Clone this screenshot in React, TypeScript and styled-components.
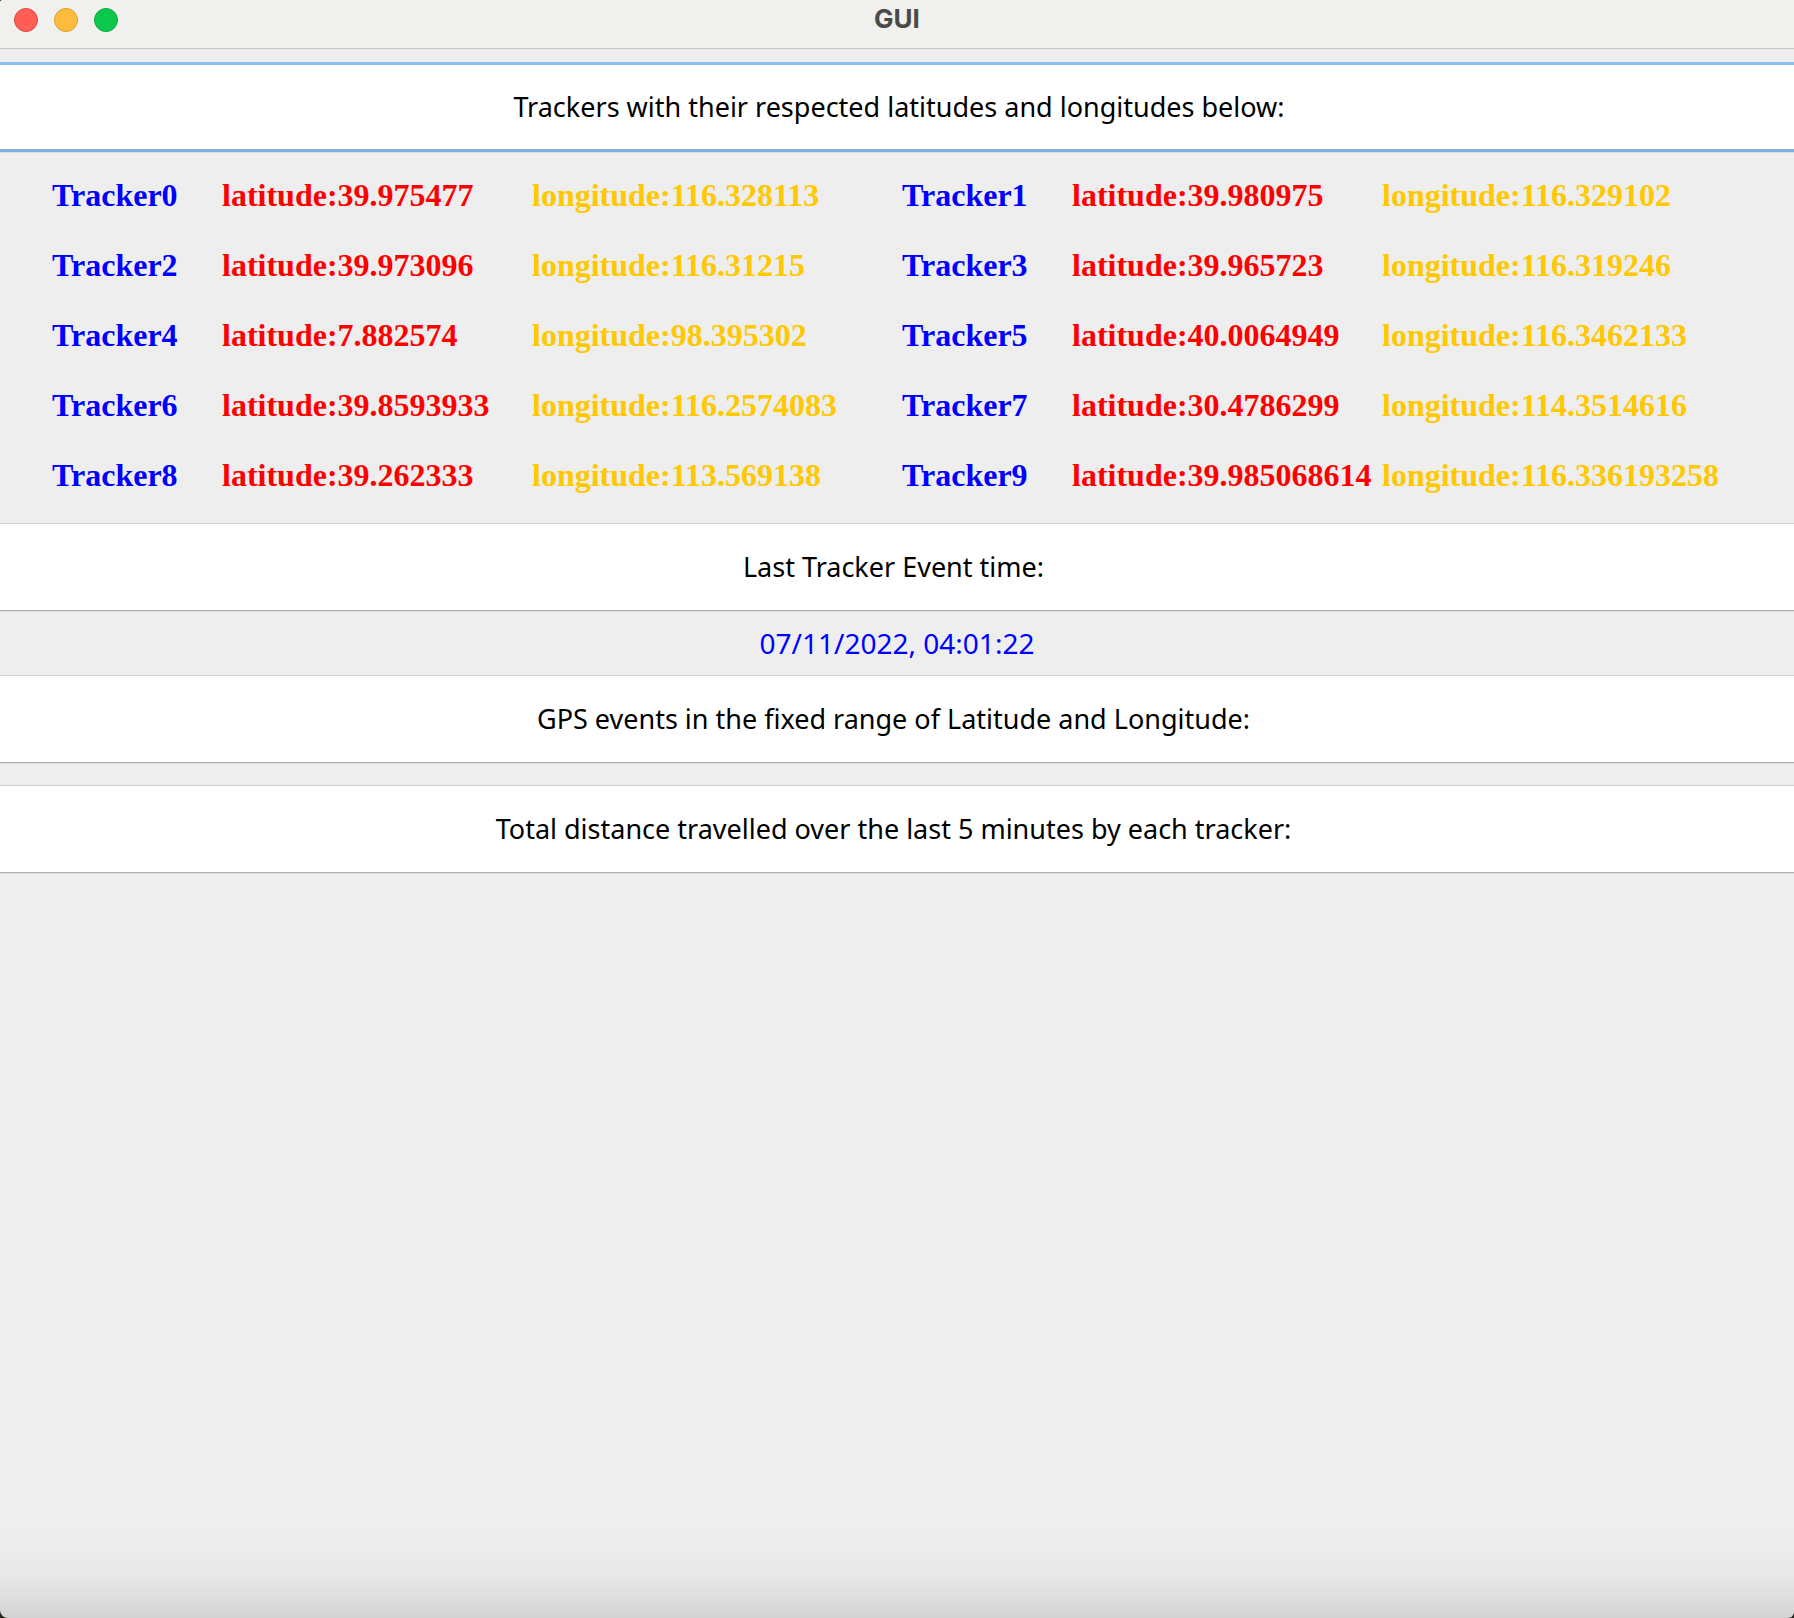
import React from "react";
import styled, { createGlobalStyle } from "styled-components";

const GlobalStyle = createGlobalStyle`
  * { box-sizing: border-box; }
  body { margin: 0; background: #2b2823; }
`;

const uiFont = `"Lucida Grande", "Noto Sans", sans-serif`;

const Window = styled.main`
  display: flex;
  flex-direction: column;
  min-height: 100vh;
  border-radius: 3px 0 6px 8px;
  background: linear-gradient(to top, #d3d3d3 0, #dedede 20px, #e8e8e8 44px, #ededed 76px, #eeeeee 100px);
  overflow: hidden;
`;

const TitleBar = styled.header`
  display: grid;
  grid-template-columns: 1fr auto 1fr;
  height: 49px;
  padding: 8px 14px 0;
  background: #f0f0ee;
  border-bottom: 1px solid #c6c6c5;
`;

const Lights = styled.div`
  display: flex;
  gap: 16px;
`;

const Light = styled.button<{ $fill: string; $edge: string }>`
  width: 24px;
  height: 24px;
  padding: 0;
  border: 1px solid ${(p) => p.$edge};
  border-radius: 50%;
  background: ${(p) => p.$fill};
`;

const Title = styled.h1`
  margin: 0;
  font: 700 26px/22px Inter, sans-serif;
  color: #4a4a49;
`;

const Content = styled.div`
  display: flex;
  flex-direction: column;
  padding-top: 13px;
`;

const Field = styled.input<{ $space?: number }>`
  width: 100%;
  height: 88px;
  margin: 0 0 ${(p) => p.$space ?? 0}px;
  padding: 0 0 2px;
  border: solid;
  border-width: 1px 0;
  border-color: #d0d0d0 transparent #b2b2b2;
  border-radius: 0;
  outline: none;
  background: #fff;
  box-shadow: 0 1px 0 #dedede;
  color: #000;
  font: 400 27px/32px ${uiFont};
  text-align: center;
`;

const ActiveField = styled(Field)`
  height: 90px;
  padding-left: 4px;
  border-width: 3px 0;
  border-color: #8abdf2 transparent #7daee2;
`;

const Trackers = styled.table`
  table-layout: fixed;
  width: 1690px;
  margin: 8px auto 13px;
  border-collapse: collapse;
  font: 700 32px/36px "Liberation Serif", serif;
  white-space: nowrap;
`;

const Col = styled.col<{ $w: number }>`
  width: ${(p) => p.$w}px;
`;

const Cell = styled.td<{ $color: string }>`
  height: 70px;
  padding: 0;
  text-align: left;
  color: ${(p) => p.$color};
`;

const EventTime = styled.time`
  display: block;
  padding: 16px 0;
  color: #0000ff;
  font: 400 28px/32px ${uiFont};
  text-align: center;
`;

const trackers = [
  ["39.975477", "116.328113"],
  ["39.980975", "116.329102"],
  ["39.973096", "116.31215"],
  ["39.965723", "116.319246"],
  ["7.882574", "98.395302"],
  ["40.0064949", "116.3462133"],
  ["39.8593933", "116.2574083"],
  ["30.4786299", "114.3514616"],
  ["39.262333", "113.569138"],
  ["39.985068614", "116.336193258"],
];

const rows = [0, 2, 4, 6, 8];

function TrackerCells({ id }: { id: number }) {
  const [lat, lon] = trackers[id];
  return (
    <>
      <Cell as="th" scope="row" $color="#0000ff">{`Tracker${id}`}</Cell>
      <Cell $color="#ff0000">{`latitude:${lat}`}</Cell>
      <Cell $color="#ffc800">{`longitude:${lon}`}</Cell>
    </>
  );
}

export default function App() {
  return (
    <>
      <GlobalStyle />
      <Window>
        <TitleBar>
          <Lights>
            <Light aria-label="Close" $fill="#ff5f57" $edge="#e2463f" />
            <Light aria-label="Minimize" $fill="#febc3f" $edge="#e09e2e" />
            <Light aria-label="Zoom" $fill="#0bc84c" $edge="#08ac3c" />
          </Lights>
          <Title>GUI</Title>
        </TitleBar>
        <Content>
          <ActiveField
            readOnly
            aria-label="Trackers heading"
            value="Trackers with their respected latitudes and longitudes below:"
          />
          <Trackers>
            <colgroup>
              <Col $w={170} />
              <Col $w={310} />
              <Col $w={370} />
              <Col $w={170} />
              <Col $w={310} />
              <Col $w={360} />
            </colgroup>
            <tbody>
              {rows.map((id) => (
                <tr key={id}>
                  <TrackerCells id={id} />
                  <TrackerCells id={id + 1} />
                </tr>
              ))}
            </tbody>
          </Trackers>
          <Field readOnly aria-label="Event time heading" value="Last Tracker Event time: " />
          <EventTime>07/11/2022, 04:01:22</EventTime>
          <Field
            readOnly
            $space={22}
            aria-label="Range heading"
            value="GPS events in the fixed range of Latitude and Longitude: "
          />
          <Field
            readOnly
            aria-label="Distance heading"
            value="Total distance travelled over the last 5 minutes by each tracker: "
          />
        </Content>
      </Window>
    </>
  );
}
